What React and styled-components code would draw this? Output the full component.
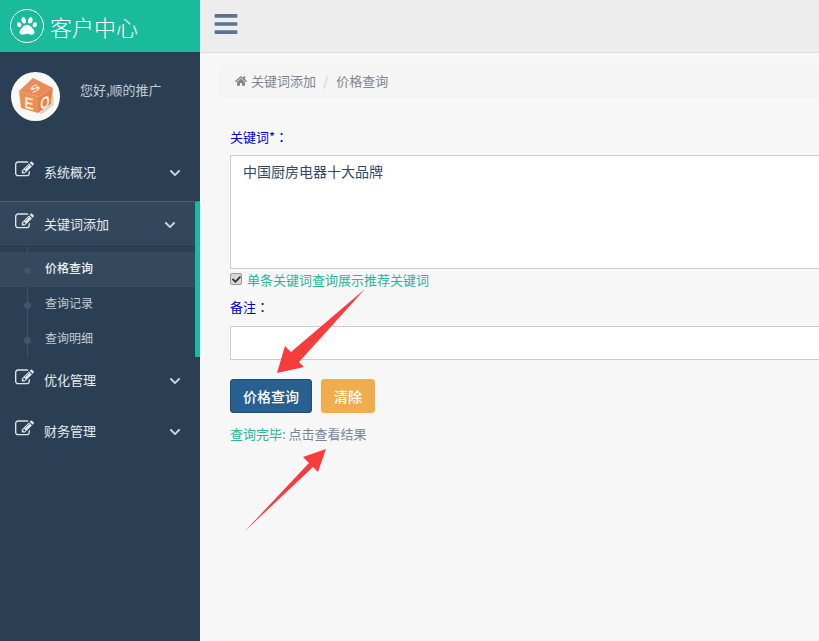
import React from 'react';
import styled, { createGlobalStyle } from 'styled-components';
import { FaPaw, FaBars, FaHome, FaChevronDown, FaCheck } from 'react-icons/fa';

const CJK = '"Noto Sans CJK SC", "Liberation Sans", sans-serif';

const Global = createGlobalStyle`
  html, body { margin: 0; padding: 0; height: 100%; overflow: hidden; }
  body { font-family: ${CJK}; font-size: 13px; background: #f7f7f7; }
  * { box-sizing: border-box; }
`;

const Page = styled.div`
  position: relative;
  display: flex;
  width: 819px;
  height: 641px;
  overflow: hidden;
`;
const Sidebar = styled.aside`
  width: 200px;
  flex: none;
  background: #2a3f54;
  display: flex;
  flex-direction: column;
`;
const Brand = styled.div`
  height: 52px;
  background: #1abb9c;
  display: flex;
  align-items: center;
  padding-left: 10px;
  gap: 6px;
  color: #fff;
  font-size: 22px;
  font-weight: 300;
  line-height: 1;
`;
const PawCircle = styled.span`
  width: 34px;
  height: 34px;
  border: 1px solid #fff;
  border-radius: 50%;
  display: flex;
  align-items: center;
  justify-content: center;
  font-size: 20px;
`;
const Profile = styled.div`
  height: 97px;
  display: flex;
  align-items: center;
  padding: 0 0 8px 11px;
  gap: 20px;
  color: #c5ccd3;
  font-size: 13px;
`;
const Avatar = styled.div`
  width: 49px;
  height: 49px;
  border-radius: 50%;
  background: #f8f8f4;
  flex: none;
  line-height: 0;
`;
const Greeting = styled.span`
  margin-bottom: 14px;
`;
const Menu = styled.nav`
  display: flex;
  flex-direction: column;
`;
const MenuRow = styled.div`
  height: ${p => p.$h || 51}px;
  display: flex;
  align-items: center;
  color: #e7ebef;
  font-size: 13px;
  padding: 0 19px ${p => p.$pb ?? 6}px 15px;
`;
const EditGlyph = styled.svg`
  width: 19px;
  height: 19px;
  margin: 0 10px 4px 0;
  flex: none;
  fill: #dfe5ea;
`;
const Label = styled.span`
  flex: 1;
`;
const Chevron = styled(FaChevronDown)`
  font-size: 12px;
  color: #ccd4dc;
  margin-top: 3px;
`;
const ActiveGroup = styled.div`
  border-top: 1px solid #4a5f74;
  border-right: 5px solid #1abb9c;
  background: #2a3f54;
`;
const ActiveHead = styled.div`
  background: #33475c;
  border-bottom: 1px solid #24364a;
  box-shadow: 0 1px 0 #2d4257;
`;
const SubMenu = styled.div`
  position: relative;
  padding-top: 5px;
`;
const SubRow = styled.div`
  position: relative;
  height: 35px;
  display: flex;
  align-items: center;
  padding: 0 0 5px 45px;
  font-size: 12px;
  font-weight: ${p => (p.$current ? 500 : 400)};
  color: ${p => (p.$current ? '#eef1f4' : '#c5ccd3')};
  background: ${p => (p.$current ? '#34495e' : 'transparent')};
  &::before {
    content: '';
    position: absolute;
    left: 24px;
    top: 50%;
    width: 7px;
    height: 7px;
    margin-top: -3px;
    border-radius: 50%;
    background: #425568;
  }
`;
const SubLine = styled.span`
  position: absolute;
  left: 27px;
  top: 0;
  bottom: 0;
  width: 1px;
  background: #425568;
`;
const Main = styled.main`
  flex: 1;
  min-width: 0;
  display: flex;
  flex-direction: column;
  background: #f7f7f7;
`;
const TopBar = styled.header`
  height: 53px;
  flex: none;
  background: #ededed;
  border-bottom: 1px solid #d9dee4;
  display: flex;
  align-items: center;
  padding: 0 0 5px 13px;
  color: #5a738e;
  font-size: 26px;
`;
const Content = styled.div`
  padding: 12px 0 0 19px;
`;
const Crumbs = styled.div`
  height: 34px;
  background: #f5f5f5;
  border-radius: 4px;
  display: flex;
  align-items: center;
  gap: 4px;
  padding: 0 0 3px 16px;
  color: #7b8794;
  font-size: 13px;
`;
const Divider = styled.span`
  color: #ccc;
  margin: 0 4px 0 3px;
`;
const Form = styled.form`
  padding: 29px 0 0 11px;
  display: flex;
  flex-direction: column;
`;
const FieldLabel = styled.label`
  color: #0000cc;
  font-size: 13px;
  line-height: 18px;
`;
const Colon = styled.span`
  font-family: "Noto Sans CJK TC", sans-serif;
`;
const Area = styled.div`
  height: 114px;
  width: 620px;
  margin-top: 9px;
  background: #fff;
  border: 1px solid #ccc;
  padding: 6px 12px;
  color: #34495e;
  font-size: 14px;
  line-height: 18px;
`;
const CheckRow = styled.div`
  display: flex;
  align-items: center;
  height: 24px;
  margin-top: -2px;
  gap: 5px;
  color: #2bb59a;
  font-size: 13px;
`;
const Check = styled.span`
  width: 12px;
  height: 12px;
  border: 1px solid #999;
  border-radius: 2px;
  background: #d8d8d8;
  color: #333;
  display: flex;
  align-items: center;
  justify-content: center;
  font-size: 9px;
`;
const NoteLabel = styled(FieldLabel)`
  margin-top: 7px;
`;
const Note = styled.div`
  height: 34px;
  width: 620px;
  margin-top: 10px;
  background: #fff;
  border: 1px solid #ccc;
`;
const Buttons = styled.div`
  display: flex;
  gap: 9px;
  margin-top: 19px;
`;
const Btn = styled.button`
  height: 34px;
  width: ${p => p.$w}px;
  padding: 0;
  border-radius: 3px;
  border: 1px solid ${p => p.$border};
  background: ${p => p.$bg};
  color: #fff;
  font-family: inherit;
  font-size: 14px;
  font-weight: 500;
`;
const Result = styled.div`
  margin-top: 12px;
  font-size: 13px;
  line-height: 18px;
  color: #2bb59a;
`;
const ResultLink = styled.span`
  color: #73879c;
`;
const Overlay = styled.svg`
  position: absolute;
  inset: 0;
  pointer-events: none;
`;

const EditIcon = () => (
  <EditGlyph viewBox="0 0 1792 1792">
    <path d="M888 1184l116-116-152-152-116 116v56h96v96h56zm440-720q-16-16-33 1l-350 350q-17 17-1 33t33-1l350-350q17-17 1-33zm80 594v190q0 119-84.500 203.500t-203.500 84.500h-832q-119 0-203.500-84.500t-84.500-203.500v-832q0-119 84.500-203.500t203.500-84.500h832q63 0 117 25 15 7 18 23 3 17-9 29l-49 49q-14 14-32 8-23-6-45-6h-832q-66 0-113 47t-47 113v832q0 66 47 113t113 47h832q66 0 113-47t47-113v-126q0-13 9-22l64-64q15-15 35-7t20 29zm-96-738l288 288-672 672h-288v-288zm444 132l-92 92-288-288 92-92q28-28 68-28t68 28l152 152q28 28 28 68t-28 68z" />
  </EditGlyph>
);

const letter = { fontWeight: 700, fill: '#fbeadd', textAnchor: 'middle', fontFamily: 'Liberation Sans' };

const Cube = () => (
  <svg width="49" height="49" viewBox="0 0 49 49">
    <path d="M22 6 L42 16 L27 25 L8 19 Z" fill="#e98c58" />
    <path d="M8 19 L27 25 L27 41 L10 36 Z" fill="#ed8f52" />
    <path d="M27 25 L42 16 L40 32 L27 41 Z" fill="#e5824a" />
    <path d="M42 16 L40 32 L27 41 L31 42 L43 33 Z" fill="#d9d6c8" />
    <text {...letter} fontSize="12" transform="translate(26 19) rotate(-35) scale(1.2 .75)">S</text>
    <text {...letter} fontSize="16" transform="translate(18 37) skewY(14) scale(.85 1)">E</text>
    <text {...letter} fontSize="16" transform="translate(34 36) skewY(-28) scale(.75 1)">O</text>
  </svg>
);

export default function App() {
  return (
    <Page>
      <Global />
      <Sidebar>
        <Brand>
          <PawCircle><FaPaw /></PawCircle>
          <span>客户中心</span>
        </Brand>
        <Profile>
          <Avatar><Cube /></Avatar>
          <Greeting>您好,顺的推广</Greeting>
        </Profile>
        <Menu>
          <MenuRow $h={52} $pb={8}><EditIcon /><Label>系统概况</Label><Chevron /></MenuRow>
          <ActiveGroup>
            <ActiveHead>
              <MenuRow $h={44} $pb={1}><EditIcon /><Label>关键词添加</Label><Chevron /></MenuRow>
            </ActiveHead>
            <SubMenu>
              <SubLine />
              <SubRow $current>价格查询</SubRow>
              <SubRow>查询记录</SubRow>
              <SubRow>查询明细</SubRow>
            </SubMenu>
          </ActiveGroup>
          <MenuRow><EditIcon /><Label>优化管理</Label><Chevron /></MenuRow>
          <MenuRow><EditIcon /><Label>财务管理</Label><Chevron /></MenuRow>
        </Menu>
      </Sidebar>
      <Main>
        <TopBar><FaBars /></TopBar>
        <Content>
          <Crumbs>
            <FaHome size={12} />
            <span>关键词添加</span>
            <Divider>/</Divider>
            <span>价格查询</span>
          </Crumbs>
          <Form>
            <FieldLabel>关键词*<Colon>：</Colon></FieldLabel>
            <Area>中国厨房电器十大品牌</Area>
            <CheckRow>
              <Check><FaCheck /></Check>
              <span>单条关键词查询展示推荐关键词</span>
            </CheckRow>
            <NoteLabel>备注<Colon>：</Colon></NoteLabel>
            <Note />
            <Buttons>
              <Btn type="button" $w={82} $bg="#286090" $border="#204d74">价格查询</Btn>
              <Btn type="button" $w={54} $bg="#f0ad4e" $border="#f0ad4e">清除</Btn>
            </Buttons>
            <Result>查询完毕: <ResultLink>点击查看结果</ResultLink></Result>
          </Form>
        </Content>
      </Main>
      <Overlay width="819" height="641" viewBox="0 0 819 641">
        <path d="M365 289 L299 362 L304 367 L277 373 L285 346 L291 352 Z" fill="#f63c3c" />
        <path d="M245 531 L309 463 L303 457 L326 449 L318 472 L313 467 Z" fill="#f63c3c" />
      </Overlay>
    </Page>
  );
}
